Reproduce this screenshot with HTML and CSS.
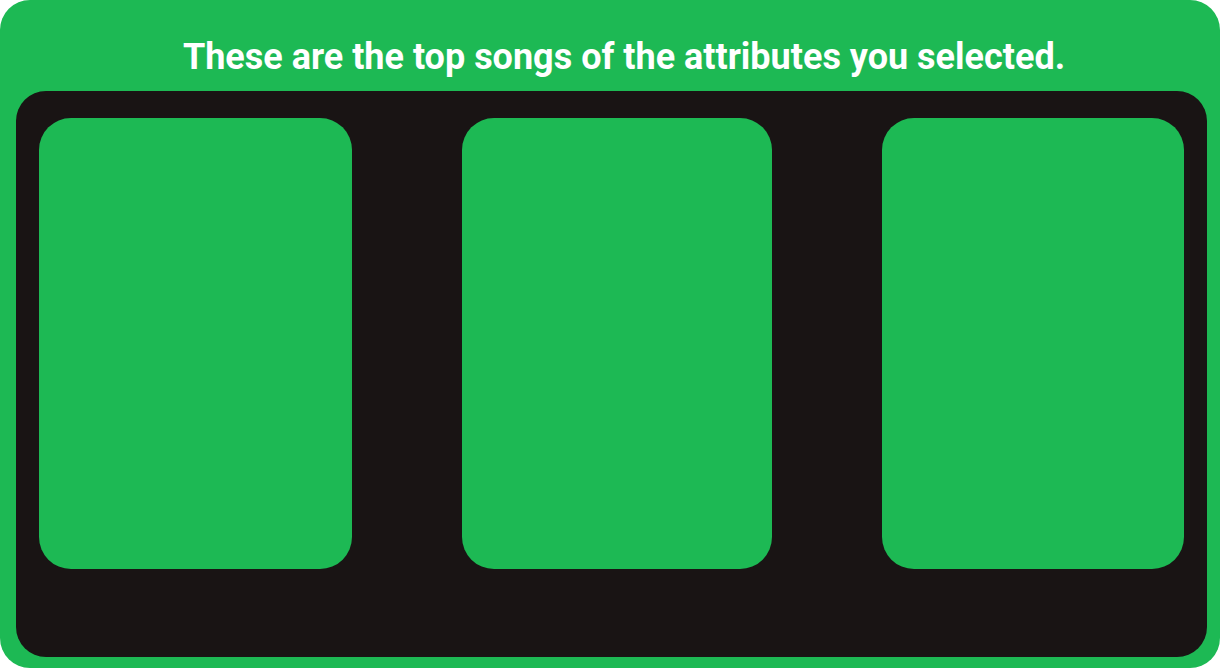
FILE: index.html
```html
<!DOCTYPE html>
<html>
<head>
<meta charset="utf-8">
<link rel="stylesheet" href="styles.css">
</head>
<body>
<div class="frame">
  <h1 class="title">These are the top songs of the attributes you selected.</h1>
  <div class="panel">
    <div class="card card-a"></div>
    <div class="card card-b"></div>
    <div class="card card-c"></div>
  </div>
</div>
</body>
</html>
```
FILE: styles.css
```css
html, body {
  margin: 0;
  padding: 0;
  background: #ffffff;
}
.frame {
  width: 1220px;
  height: 668px;
  box-sizing: border-box;
  background: #1db954;
  border-radius: 30px;
  padding: 0 13px 11px 16px;
  display: flex;
  flex-direction: column;
}
.title {
  margin: 0;
  height: 91px;
  box-sizing: border-box;
  padding: 39px 0 0 25px;
  text-align: center;
  font-family: Roboto, "Liberation Sans", sans-serif;
  font-weight: 700;
  font-size: 36px;
  line-height: 36px;
  color: #ffffff;
}
.panel {
  flex: 1;
  background: #191414;
  border-radius: 30px;
  padding: 27px 23px 0 23px;
  display: flex;
  justify-content: space-between;
  align-items: flex-start;
}
.card {
  height: 451px;
  background: #1db954;
  border-radius: 32px;
}
.card-a { width: 313px; }
.card-b { width: 310px; }
.card-c { width: 302px; }
```
